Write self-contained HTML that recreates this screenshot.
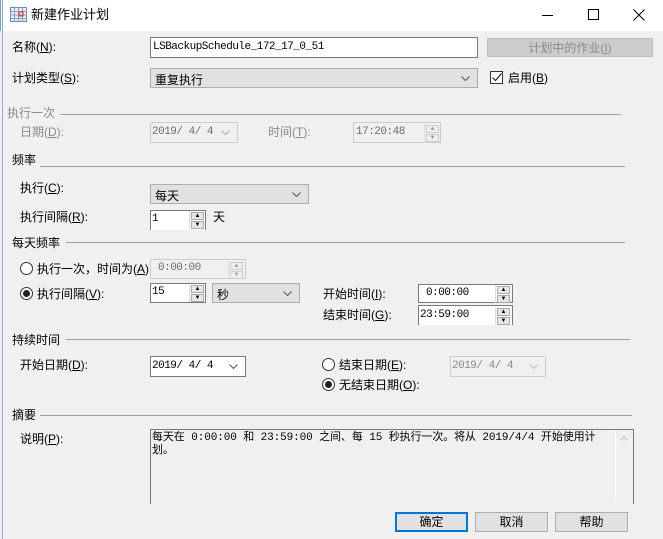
<!DOCTYPE html>
<html><head><meta charset="utf-8"><style>
*{box-sizing:border-box;margin:0;padding:0}
body{width:663px;height:539px;overflow:hidden;background:#f0f0f0;font-family:"Liberation Sans","Noto Sans CJK SC",sans-serif;font-size:12px;color:#000;position:relative}
.a{position:absolute;white-space:nowrap;line-height:14px}
.title{position:absolute;left:0;top:0;width:663px;height:31px;background:#fff;border-left:1px solid #7a9cc6}
.frame{position:absolute;left:2px;top:0;width:1px;height:539px;background:#8fb0d8}
.box{position:absolute;background:#fff;border:1px solid #7a7a7a}
.dis{background:#f0f0f0;border:1px solid #cccccc;color:#6d6d6d}
.sel{position:absolute;background:#e1e1e1;border:1px solid #adadad}
.mono{font-family:"Liberation Mono","Noto Sans CJK SC",monospace;font-size:11px;letter-spacing:-0.5px}
.line{position:absolute;height:1px;background:#a0a0a0}
.g{color:#6d6d6d}
.spin{position:absolute;width:15px;border-left:1px solid #ddd}
.spin i{display:block;width:13px;height:8px;margin:1px 0 0 1px;background:#e6e6e6;border:1px solid #aaa;font-style:normal;font-size:6px;line-height:6px;text-align:center;color:#000}
.chev{position:absolute;right:7px;top:7px;width:9px;height:5px}
.radio{position:absolute;width:13px;height:13px;border:1px solid #333;border-radius:50%;background:#fff}
.radio.on::after{content:"";position:absolute;left:2px;top:2px;width:7px;height:7px;border-radius:50%;background:#222}
.btn{position:absolute;height:20px;background:#e1e1e1;border:1px solid #adadad;text-align:center;line-height:18px}
</style></head><body>
<div class="title"></div>
<div class="frame"></div>
<svg class="a" style="left:10px;top:7px" width="17" height="15"><rect x="0.5" y="0.5" width="16" height="14" fill="#e8eef8" stroke="#6d86b8"/><path d="M0 4.5H17M0 8H17M0 11.5H17M4.5 0V15M8.5 0V15M12.5 0V15" stroke="#8aa0c8"/><rect x="9" y="5" width="4" height="4" fill="none" stroke="#e03030"/></svg>
<div class="a" style="left:31px;top:8px;font-size:13px">新建作业计划</div>
<div class="a" style="left:542px;top:15px;width:11px;height:1px;background:#000"></div>
<div class="a" style="left:588px;top:9px;width:11px;height:11px;border:1px solid #000"></div>
<svg class="a" style="left:633px;top:9px" width="12" height="12"><path d="M0.5 0.5L11.5 11.5M11.5 0.5L0.5 11.5" stroke="#000"/></svg>

<div class="a" style="left:12px;top:40px">名称(<u>N</u>):</div>
<div class="box mono" style="left:150px;top:37px;width:328px;height:21px;padding:3px 2px">LSBackupSchedule_172_17_0_51</div>
<div class="btn g" style="left:487px;top:38px;width:166px;height:19px;background:#cccccc;border-color:#bfbfbf;color:#8a8a8a">计划中的作业(<u>I</u>)</div>

<div class="a" style="left:12px;top:71px">计划类型(<u>S</u>):</div>
<div class="sel" style="left:150px;top:68px;width:328px;height:20px;padding:2px 4px">重复执行<svg class="chev"><path d="M0.5 0.5L4.5 4.5L8.5 0.5" stroke="#555" fill="none"/></svg></div>
<div class="a" style="left:490px;top:71px;width:13px;height:13px;border:1px solid #333;background:#fff"></div>
<svg class="a" style="left:492px;top:73px" width="10" height="9"><path d="M0.5 4.5L3.5 7.5L9.5 0.5" stroke="#222" fill="none" stroke-width="1.2"/></svg>
<div class="a" style="left:508px;top:71px">启用(<u>B</u>)</div>

<div class="a g" style="left:7px;top:106px;color:#8a8a8a">执行一次</div>
<div class="line" style="left:60px;top:114px;width:561px"></div>
<div class="a g" style="left:20px;top:125px;color:#8a8a8a">日期(<u>D</u>):</div>
<div class="box dis mono" style="left:150px;top:122px;width:88px;height:21px;padding:3px 1px">2019/ 4/ 4<svg class="chev"><path d="M0.5 0.5L4.5 4.5L8.5 0.5" stroke="#aaa" fill="none"/></svg></div>
<div class="a g" style="left:268px;top:125px;color:#8a8a8a">时间(<u>T</u>):</div>
<div class="box dis mono" style="left:353px;top:122px;width:88px;height:21px;padding:3px 2px">17:20:48</div>
<div class="spin" style="left:424px;top:124px"><i style="background:#eee;border-color:#ccc;color:#999">▲</i><i style="background:#eee;border-color:#ccc;color:#999">▼</i></div>

<div class="a" style="left:12px;top:153px">频率</div>
<div class="line" style="left:40px;top:166px;width:585px"></div>
<div class="a" style="left:20px;top:181px">执行(<u>C</u>):</div>
<div class="sel" style="left:150px;top:184px;width:159px;height:20px;padding:2px 4px">每天<svg class="chev"><path d="M0.5 0.5L4.5 4.5L8.5 0.5" stroke="#555" fill="none"/></svg></div>
<div class="a" style="left:20px;top:210px">执行间隔(<u>R</u>):</div>
<div class="box mono" style="left:150px;top:210px;width:56px;height:20px;padding:2px 1px;border-bottom:none">1</div>
<div class="spin" style="left:189px;top:211px"><i>▲</i><i>▼</i></div>
<div class="a" style="left:213px;top:210px">天</div>

<div class="a" style="left:12px;top:236px">每天频率</div>
<div class="line" style="left:66px;top:242px;width:559px"></div>
<div class="radio" style="left:20px;top:262px"></div>
<div class="a" style="left:37px;top:262px">执行一次，时间为(<u>A</u>)</div>
<div class="box dis mono" style="left:150px;top:259px;width:96px;height:20px;padding:2px 7px">0:00:00</div>
<div class="spin" style="left:228px;top:261px"><i style="background:#eee;border-color:#ccc;color:#999">▲</i><i style="background:#eee;border-color:#ccc;color:#999">▼</i></div>
<div class="radio on" style="left:20px;top:287px"></div>
<div class="a" style="left:37px;top:287px">执行间隔(<u>V</u>):</div>
<div class="box mono" style="left:150px;top:283px;width:56px;height:20px;padding:2px 1px">15</div>
<div class="spin" style="left:189px;top:284px"><i>▲</i><i>▼</i></div>
<div class="sel" style="left:212px;top:283px;width:88px;height:20px;padding:2px 4px">秒<svg class="chev"><path d="M0.5 0.5L4.5 4.5L8.5 0.5" stroke="#555" fill="none"/></svg></div>
<div class="a" style="left:323px;top:287px">开始时间(<u>I</u>):</div>
<div class="box mono" style="left:418px;top:284px;width:95px;height:19px;padding:2px 7px">0:00:00</div>
<div class="spin" style="left:495px;top:285px"><i>▲</i><i>▼</i></div>
<div class="a" style="left:323px;top:308px">结束时间(<u>G</u>):</div>
<div class="box mono" style="left:418px;top:305px;width:95px;height:20px;padding:3px 1px;border-bottom:none">23:59:00</div>
<div class="spin" style="left:495px;top:307px"><i>▲</i><i>▼</i></div>

<div class="a" style="left:12px;top:333px">持续时间</div>
<div class="line" style="left:66px;top:339px;width:564px"></div>
<div class="a" style="left:20px;top:358px">开始日期(<u>D</u>):</div>
<div class="box mono" style="left:150px;top:356px;width:96px;height:21px;padding:3px 1px">2019/ 4/ 4<svg class="chev"><path d="M0.5 0.5L4.5 4.5L8.5 0.5" stroke="#555" fill="none"/></svg></div>
<div class="radio" style="left:322px;top:358px"></div>
<div class="a" style="left:339px;top:358px">结束日期(<u>E</u>):</div>
<div class="box dis mono" style="left:450px;top:356px;width:96px;height:21px;padding:3px 1px;color:#8a8a8a">2019/ 4/ 4<svg class="chev"><path d="M0.5 0.5L4.5 4.5L8.5 0.5" stroke="#bbb" fill="none"/></svg></div>
<div class="radio on" style="left:322px;top:378px"></div>
<div class="a" style="left:339px;top:378px">无结束日期(<u>O</u>):</div>

<div class="a" style="left:12px;top:408px">摘要</div>
<div class="line" style="left:40px;top:415px;width:592px"></div>
<div class="a" style="left:20px;top:432px">说明(<u>P</u>):</div>
<div class="box mono" style="left:150px;top:429px;width:484px;height:75px;background:#f0f0f0;border-bottom:none;padding:2px 1px;line-height:13px;white-space:nowrap;letter-spacing:-0.1px;overflow:hidden">每天在 0:00:00 和 23:59:00 之间、每 15 秒执行一次。将从 2019/4/4 开始使用计<br>划。</div>
<div class="a" style="left:615px;top:430px;width:1px;height:72px;background:#fff"></div>
<svg class="a" style="left:620px;top:436px" width="8" height="5"><path d="M0.5 4.5L4 1L7.5 4.5" stroke="#bbb" fill="none"/></svg>

<div class="btn" style="left:395px;top:512px;width:73px;border:2px solid #0078d7;line-height:16px">确定</div>
<div class="btn" style="left:475px;top:512px;width:73px">取消</div>
<div class="btn" style="left:555px;top:512px;width:73px">帮助</div>
</body></html>
